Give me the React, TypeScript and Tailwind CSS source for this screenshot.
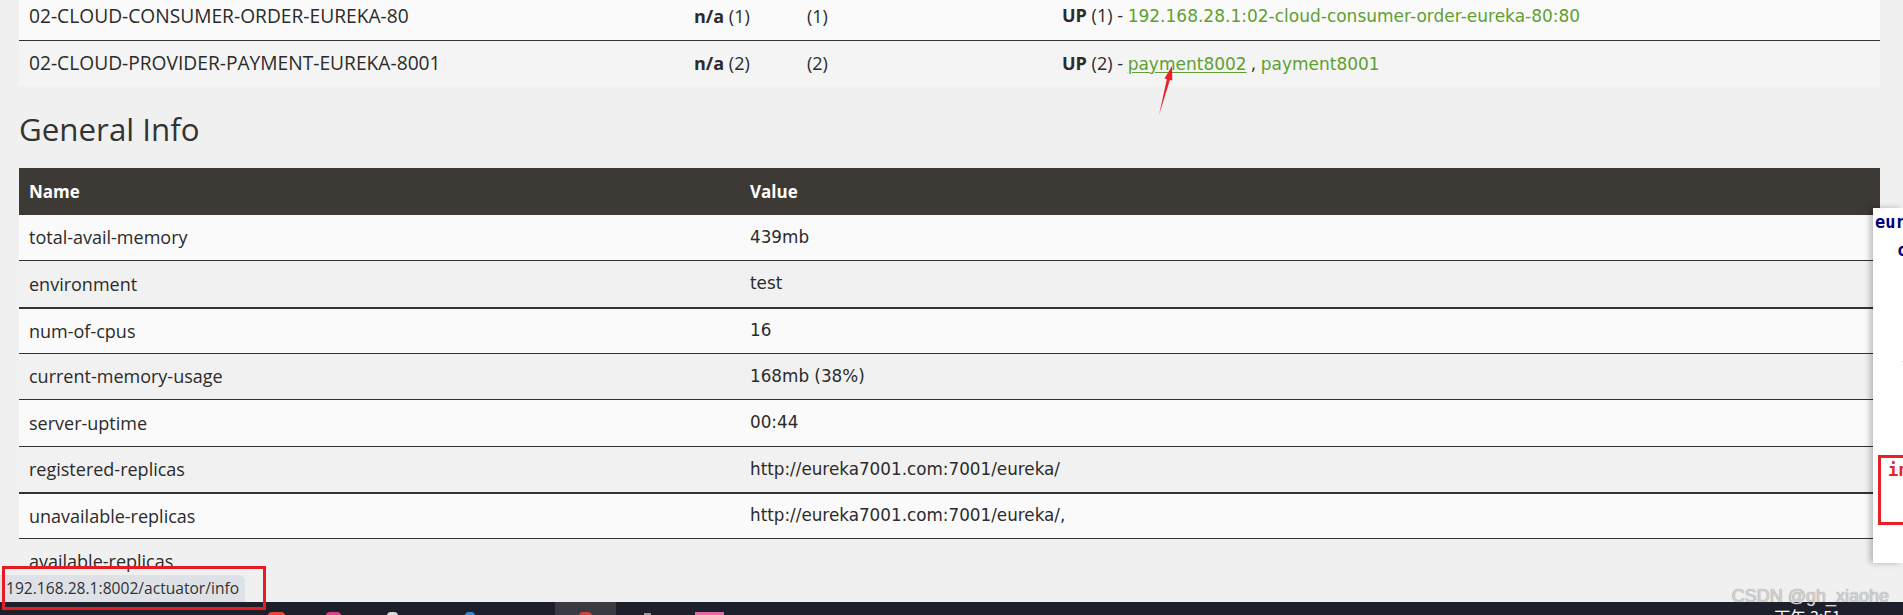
import React from "react";

const OS = "font-['Open_Sans',sans-serif]";
const DV = "font-['DejaVu_Sans',sans-serif]";

const infoRows: { name: string; value: string; cls: string }[] = [
  { name: "total-avail-memory", value: "439mb", cls: "h-[45px] bg-[#fafafa]" },
  { name: "environment", value: "test", cls: "h-[47px] bg-[#f1f1f1] border-t border-[#333]" },
  { name: "num-of-cpus", value: "16", cls: "h-[46px] bg-[#fafafa] border-t-2 border-[#333]" },
  { name: "current-memory-usage", value: "168mb (38%)", cls: "h-[46px] bg-[#f1f1f1] border-t border-[#333]" },
  { name: "server-uptime", value: "00:44", cls: "h-[47px] bg-[#fafafa] border-t border-[#333]" },
  { name: "registered-replicas", value: "http://eureka7001.com:7001/eureka/", cls: "h-[46px] bg-[#f1f1f1] border-t border-[#333]" },
  { name: "unavailable-replicas", value: "http://eureka7001.com:7001/eureka/,", cls: "h-[46px] bg-[#fafafa] border-t-2 border-[#333]" },
  { name: "available-replicas", value: "", cls: "h-[46px] bg-[#f0f0f0] border-t border-[#333]" },
];

const GREEN = "text-[#5f9f31]";

export default function App() {
  return (
    <div className="relative w-[1903px] h-[615px] overflow-hidden bg-[#f0f0f0] flex flex-col text-[#2b2b2b]">
      {/* browser content */}
      <div className="relative flex-1 overflow-hidden">
        {/* top applications table (scrolled) */}
        <div className="ml-[19px] w-[1861px] -mt-[8px]">
          <div className={`h-[49px] bg-[#fafafa] border-b border-[#333] flex items-center text-[18px] ${OS}`}>
            <div className="w-[665px] pl-[10px] font-medium text-[19.2px]">02-CLOUD-CONSUMER-ORDER-EUREKA-80</div>
            <div className="w-[113px] pl-[10px]"><b>n/a</b> (1)</div>
            <div className="w-[255px] pl-[10px]">(1)</div>
            <div className="flex-1 pl-[10px] whitespace-nowrap">
              <b>UP</b> (1) - <span className={`${DV} text-[17px] ${GREEN}`}>192.168.28.1:02-cloud-consumer-order-eureka-80:80</span>
            </div>
          </div>
          <div className={`h-[45px] bg-[#f4f4f4] flex items-center text-[18px] ${OS}`}>
            <div className="w-[665px] pl-[10px] font-medium text-[19.2px]">02-CLOUD-PROVIDER-PAYMENT-EUREKA-8001</div>
            <div className="w-[113px] pl-[10px]"><b>n/a</b> (2)</div>
            <div className="w-[255px] pl-[10px]">(2)</div>
            <div className="flex-1 pl-[10px] whitespace-nowrap">
              <b>UP</b> (2) - <span className={`${DV} text-[17px] ${GREEN} underline decoration-1 underline-offset-2`}>payment8002</span> , <span className={`${DV} text-[17px] ${GREEN}`}>payment8001</span>
            </div>
          </div>
        </div>

        {/* General Info heading */}
        <h2 className={`ml-[19px] mt-[22px] h-[42px] leading-[42px] text-[31.3px] text-[#333] ${OS}`}>General Info</h2>

        {/* General Info table */}
        <div className="ml-[19px] w-[1861px] mt-[18px]">
          <div className={`h-[47px] bg-[#3d3a35] text-white font-bold text-[17px] flex items-center ${OS}`}>
            <div className="w-[721px] pl-[10px]">Name</div>
            <div className="flex-1 pl-[10px]">Value</div>
          </div>
          {infoRows.map((r) => (
            <div key={r.name} className={`${r.cls} flex items-center`}>
              <div className={`w-[721px] pl-[10px] text-[18px] ${OS}`}>{r.name}</div>
              <div className={`flex-1 pl-[10px] text-[16.8px] ${DV}`}>{r.value}</div>
            </div>
          ))}
        </div>
      </div>

      {/* taskbar */}
      <div className="relative h-[13px] bg-[#1d1f2b] flex items-start">
        <div className="ml-[268px] mt-[10px] w-[17px] h-[4px] rounded-t-full bg-[#e8483a]" />
        <div className="ml-[41px] mt-[10px] w-[15px] h-[4px] rounded-t-sm bg-[#e23f8e]" />
        <div className="ml-[46px] mt-[10px] w-[11px] h-[4px] rounded-t-sm bg-[#d9d9d9]" />
        <div className="ml-[67px] mt-[10px] w-[10px] h-[4px] rounded-t-full bg-[#2f8be0]" />
        <div className="ml-[80px] w-[61px] h-[13px] bg-[#3a3b42] flex justify-center">
          <div className="mt-[10px] w-[13px] h-[4px] rounded-t-full bg-[#d8413a]" />
        </div>
        <div className="ml-[28px] mt-[11px] w-[7px] h-[3px] bg-[#9a9a9a]" />
        <div className="ml-[44px] mt-[10px] w-[29px] h-[4px] bg-[#e46aa7]" />
        <div className="ml-auto mr-[62px] mt-[6px] text-[16px] leading-[16px] text-white font-['Noto_Sans_CJK_SC',sans-serif]">下午 3:51</div>
      </div>

      {/* red arrow annotation */}
      <svg className="absolute left-0 top-0 pointer-events-none" width="1903" height="615">
        <polygon
          points="1172,66 1172.3,80.5 1169.9,79.9 1159,115 1166.9,79.1 1164.5,78.5"
          fill="#e8202a"
        />
      </svg>

      {/* floating editor panel on the right */}
      <div className="absolute left-[1873px] top-[208px] w-[30px] h-[355px] bg-white shadow-[-3px_0_6px_rgba(0,0,0,0.25)] overflow-hidden">
        <div className="pt-[1px] font-['DejaVu_Sans_Mono',monospace] font-bold text-[17px] leading-[27.5px] whitespace-nowrap">
          <div className="pl-[2px] text-[#000080]">eureka:</div>
          <div className="pl-[24px] text-[#000080]">client:</div>
          <div>&nbsp;</div>
          <div className="pl-[28px] text-[#6464c8] font-normal">register-with-eureka: true</div>
          <div>&nbsp;</div>
          <div className="pl-[27px] text-[#444] font-normal">- fetch</div>
          <div>&nbsp;</div>
          <div>&nbsp;</div>
          <div>&nbsp;</div>
          <div className="pl-[15px] text-[#e8202a]">instance:</div>
        </div>
        <div className="absolute left-[5px] top-[247px] w-[40px] h-[70px] border-[3px] border-[#e8202a]" />
      </div>

      {/* browser status bubble */}
      <div className={`absolute left-0 top-[575px] w-[245px] h-[27px] bg-[#dee1e6] rounded-tr-[6px] pl-[6px] flex items-center text-[15.6px] text-[#333] ${OS}`}>
        192.168.28.1:8002/actuator/info
      </div>
      <div className="absolute left-[2px] top-[566px] w-[264px] h-[44px] border-[3px] border-[#e51c23]" />

      {/* watermark */}
      <div className="absolute right-[14px] top-[586px] text-[18px] leading-[20px] text-[#d4d4d4] font-['Liberation_Sans',sans-serif] [text-shadow:0_0_1px_#7a7a7a]">
        CSDN @gh_xiaohe
      </div>
    </div>
  );
}
